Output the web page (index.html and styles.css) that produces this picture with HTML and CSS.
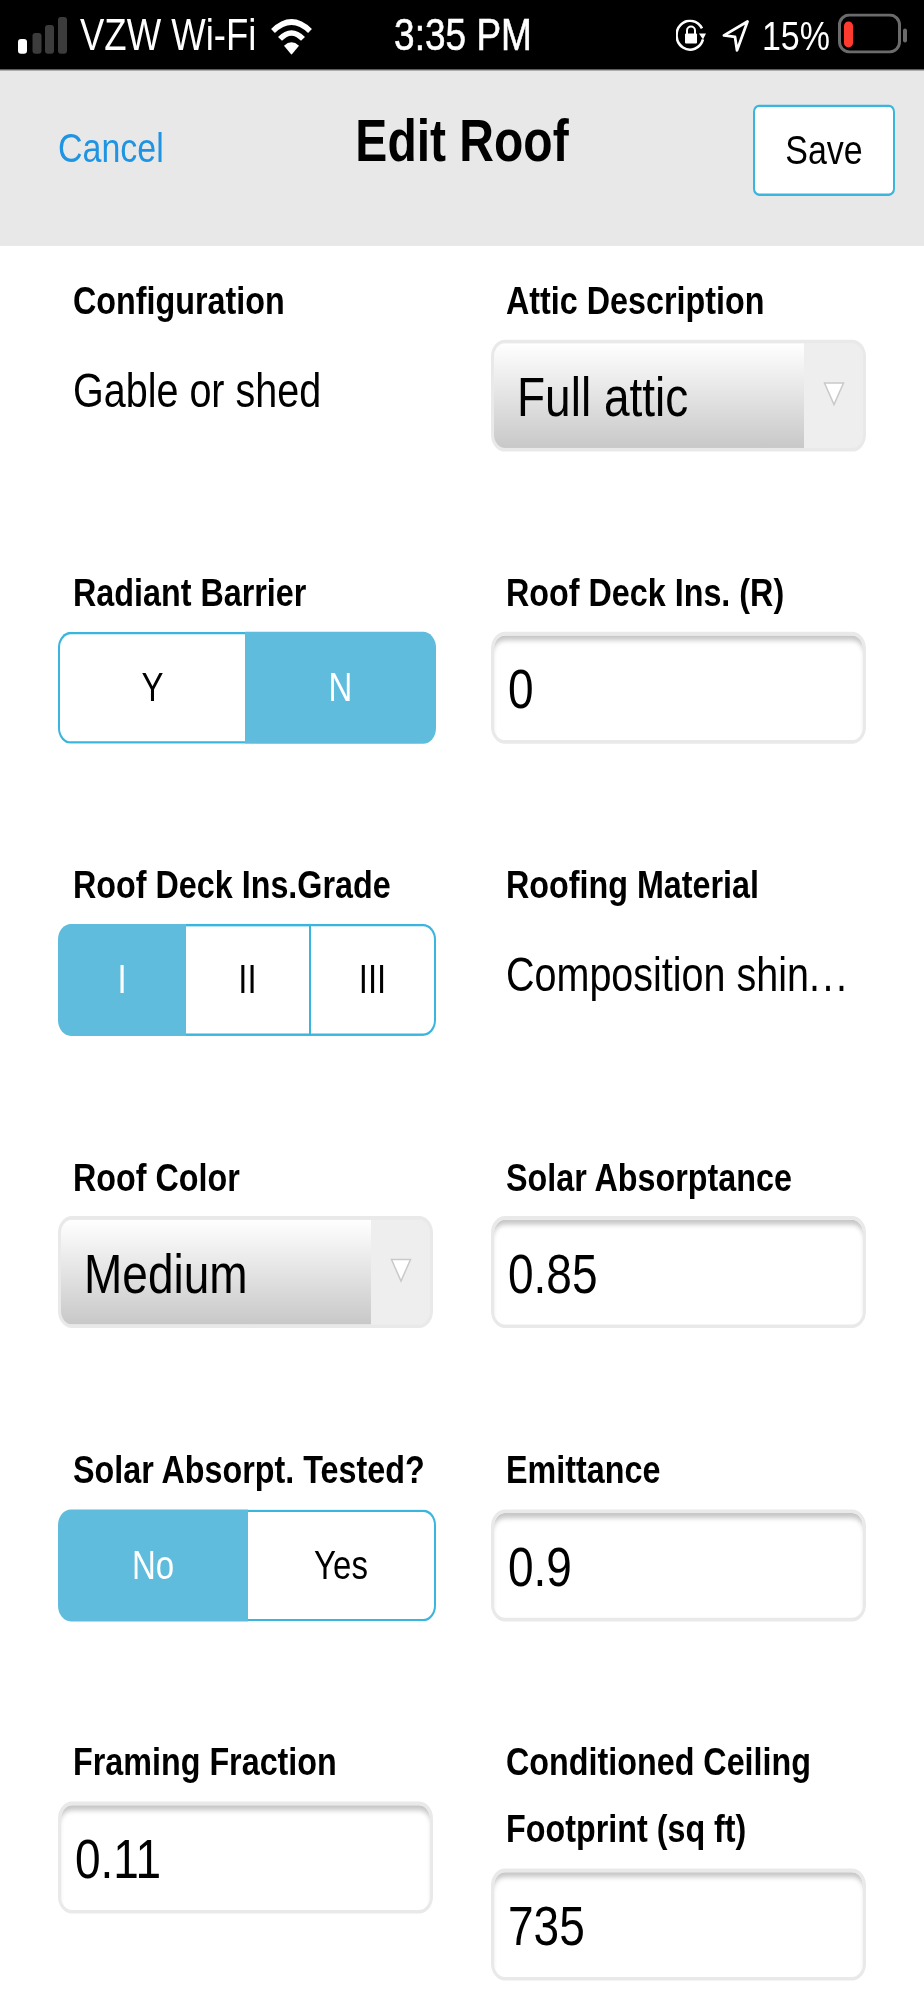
FILE: index.html
```html
<!DOCTYPE html>
<html lang="en">
<head>
<meta charset="utf-8">
<title>Edit Roof</title>
<link rel="stylesheet" href="styles.css">
</head>
<body>
<div class="app">
  <div class="status">
    <div class="status-left">
      <svg class="icon-signal" viewBox="0 0 50 38" preserveAspectRatio="none"><rect x="0" y="22" width="9" height="15" rx="3" fill="#fff"/><rect x="14.500" y="16" width="9" height="21" rx="3" fill="#3c3c3c"/><rect x="27" y="8" width="9" height="29" rx="3" fill="#3c3c3c"/><rect x="40" y="0" width="9" height="37" rx="3" fill="#3c3c3c"/></svg>
      <span class="carrier">VZW Wi-Fi</span>
      <svg class="icon-wifi" viewBox="0 0 43 38" preserveAspectRatio="none"><path d="M3 14Q21.500 -4 40 14" fill="none" stroke="#fff" stroke-width="5.500"/><path d="M10 22Q21.500 10 33 22" fill="none" stroke="#fff" stroke-width="5.500"/><path d="M14 29Q21.500 22 29 29L21.500 38Z" fill="#fff"/></svg>
    </div>
    <span class="time">3:35 PM</span>
    <div class="status-right">
      <svg class="icon-lock" viewBox="0 0 30 33" preserveAspectRatio="none"><path d="M27 20A13.500 14.500 0 1 1 26 9" fill="none" stroke="#fff" stroke-width="2.600"/><path d="M23 14L30 14L27 20Z" fill="#fff"/><rect x="9" y="14" width="12" height="10" rx="1" fill="#fff"/><path d="M11 15V11A4 4 0 0 1 19 11V15" fill="none" stroke="#fff" stroke-width="2"/></svg>
      <svg class="icon-nav" viewBox="0 0 27 33" preserveAspectRatio="none"><path d="M25.500 2L2 16L13 17.500L15 31Z" fill="none" stroke="#fff" stroke-width="2.800" stroke-linejoin="round"/></svg>
      <span class="percent">15%</span>
      <svg class="icon-battery" viewBox="0 0 70 41" preserveAspectRatio="none"><rect x="1.500" y="1.500" width="60" height="37" rx="10" fill="none" stroke="#6b6b6b" stroke-width="3"/><rect x="6" y="8" width="9" height="26" rx="4.500" fill="#ff3b30"/><rect x="65" y="15" width="4" height="14" rx="2" fill="#6b6b6b"/></svg>
    </div>
  </div>

  <header class="nav">
    <span class="cancel">Cancel</span>
    <h1 class="title">Edit Roof</h1>
    <div class="save">Save</div>
  </header>

  <main class="form">
    <section class="field">
      <div class="label">Configuration</div>
      <div class="value">Gable or shed</div>
    </section>
    <section class="field">
      <div class="label">Attic Description</div>
      <div class="select"><div class="select-text">Full attic</div><div class="select-arrow"><svg class="tri" viewBox="0 0 22 26" preserveAspectRatio="none"><path d="M1.500 2H20.500L11 24Z" fill="#fff" stroke="#c9c9c9" stroke-width="1.500"/></svg></div></div>
    </section>

    <section class="field">
      <div class="label">Radiant Barrier</div>
      <div class="toggle"><div class="seg seg-first seg-y">Y</div><div class="seg on seg-last">N</div></div>
    </section>
    <section class="field">
      <div class="label">Roof Deck Ins. (R)</div>
      <div class="input">0</div>
    </section>

    <section class="field">
      <div class="label">Roof Deck Ins.Grade</div>
      <div class="toggle"><div class="seg on seg-first seg-one">I</div><div class="seg">II</div><div class="seg seg-last">III</div></div>
    </section>
    <section class="field">
      <div class="label">Roofing Material</div>
      <div class="value">Composition shin<span class="dots">...</span></div>
    </section>

    <section class="field">
      <div class="label">Roof Color</div>
      <div class="select"><div class="select-text">Medium</div><div class="select-arrow"><svg class="tri" viewBox="0 0 22 26" preserveAspectRatio="none"><path d="M1.500 2H20.500L11 24Z" fill="#fff" stroke="#c9c9c9" stroke-width="1.500"/></svg></div></div>
    </section>
    <section class="field">
      <div class="label">Solar Absorptance</div>
      <div class="input">0.85</div>
    </section>

    <section class="field">
      <div class="label">Solar Absorpt. Tested?</div>
      <div class="toggle"><div class="seg on seg-first seg-no">No</div><div class="seg seg-last">Yes</div></div>
    </section>
    <section class="field">
      <div class="label">Emittance</div>
      <div class="input">0.9</div>
    </section>

    <section class="field">
      <div class="label">Framing Fraction</div>
      <div class="input">0.11</div>
    </section>
    <section class="field">
      <div class="label">Conditioned Ceiling<br>Footprint (sq ft)</div>
      <div class="input">735</div>
    </section>
  </main>
</div>
</body>
</html>
```
FILE: styles.css
```css
html, body {
  margin: 0;
  padding: 0;
  background: #fff;
}

body {
  font-family: "Liberation Sans", Arial, sans-serif;
  color: #000;
  overflow: hidden;
  height: 2000px;
}

/* The source capture is stretched vertically: layout is done at 1643px tall. */
.app {
  width: 924px;
  height: 1643px;
  overflow: hidden;
  transform: scaleY(1.2173);
  transform-origin: top left;
  filter: blur(0.6px);
  background: #fff;
}

/* Status bar */
.status {
  display: grid;
  grid-template-columns: 1fr auto 1fr;
  align-items: center;
  height: 57.5px;
  box-sizing: border-box;
  padding: 1.500px 16px 0 18px;
  background: #000;
  border-bottom: 1px solid #999;
  color: #fff;
}

.status-left,
.status-right {
  display: flex;
  align-items: center;
}

.status-right {
  justify-content: flex-end;
}

.icon-signal {
  width: 50px;
  height: 31px;
  margin-right: 12px;
}

.carrier {
  font-size: 36.500px;
  line-height: 40px;
}

.icon-wifi {
  width: 43px;
  height: 31px;
  margin-left: 14px;
}

.time {
  font-size: 37px;
  line-height: 40px;
  -webkit-text-stroke: 0.5px #fff;
}

.icon-lock {
  width: 30px;
  height: 27px;
  margin-right: 16px;
}

.icon-nav {
  width: 27px;
  height: 27px;
  margin-right: 13px;
}

.percent {
  font-size: 34px;
  line-height: 40px;
  margin-right: 8px;
}

.icon-battery {
  width: 70px;
  height: 33.700px;
  margin-bottom: 3px;
}

/* Navigation header */
.nav {
  display: grid;
  grid-template-columns: 1fr auto 1fr;
  align-items: start;
  height: 144.500px;
  box-sizing: border-box;
  padding: 0 29px;
  background: #e8e8e8;
}

.cancel {
  margin: 43.500px 0 0 29px;
  font-size: 34px;
  line-height: 40px;
  color: #1f94e2;
}

.title {
  margin: 30px 0 0;
  font-size: 48px;
  line-height: 56px;
  font-weight: 700;
}

.save {
  justify-self: end;
  width: 142px;
  height: 75px;
  margin-top: 28.500px;
  box-sizing: border-box;
  border: 2.500px solid #3ab5de;
  border-radius: 6px;
  background: #fff;
  font-size: 34px;
  line-height: 71px;
  text-align: center;
}

/* Form grid */
.form {
  display: grid;
  grid-template-columns: 378px 375px;
  column-gap: 55px;
  row-gap: 88.600px;
  padding: 17.700px 0 0 58px;
}

.label {
  padding-left: 15px;
  margin-bottom: 4.500px;
  font-size: 32.300px;
  line-height: 55px;
  font-weight: 700;
  white-space: nowrap;
}

.value {
  padding-left: 15px;
  margin-top: 22px;
  font-size: 39.500px;
  line-height: 46px;
  white-space: nowrap;
}

.dots {
  letter-spacing: 2.500px;
}

/* Text input */
.input {
  width: 375px;
  height: 92px;
  box-sizing: border-box;
  padding: 0 0 0 14px;
  border: 3px solid #e9e9e9;
  border-radius: 14px;
  background: #fff;
  box-shadow: inset 0 6px 5px -2px #c6c6c6;
  font-size: 46px;
  line-height: 88px;
}

/* Select */
.select {
  display: flex;
  width: 375px;
  height: 92px;
  box-sizing: border-box;
  border: 3px solid #e9e9e9;
  border-radius: 14px;
  overflow: hidden;
  background: #eee;
}

.select-text {
  flex: 1;
  padding-left: 23px;
  background: linear-gradient(#fff, #c8c8c8);
  font-size: 46px;
  line-height: 88px;
}

.select-arrow {
  display: flex;
  align-items: center;
  justify-content: center;
  width: 59px;
  padding-bottom: 3px;
  box-sizing: border-box;
}

.tri {
  width: 22px;
  height: 21px;
}

/* Segmented toggle */
.toggle {
  display: flex;
  width: 378px;
  height: 92px;
  box-sizing: border-box;
}

.seg {
  flex: 1;
  display: flex;
  align-items: center;
  justify-content: center;
  box-sizing: border-box;
  border: 2.500px solid #3ab5de;
  border-left-width: 0;
  background: #fff;
  font-size: 33px;
}

.seg-first {
  border-left-width: 2.500px;
  border-right-width: 0;
  border-radius: 13px 0 0 13px;
}

.seg-last {
  border-radius: 0 13px 13px 0;
}

.seg-y {
  flex: 0 0 187px;
}

.seg-one {
  flex: 0 0 128px;
}

.seg-no {
  flex: 0 0 190px;
}

.seg.on {
  border: 0;
  background: #5fbcdd;
  color: #fff;
}
```
